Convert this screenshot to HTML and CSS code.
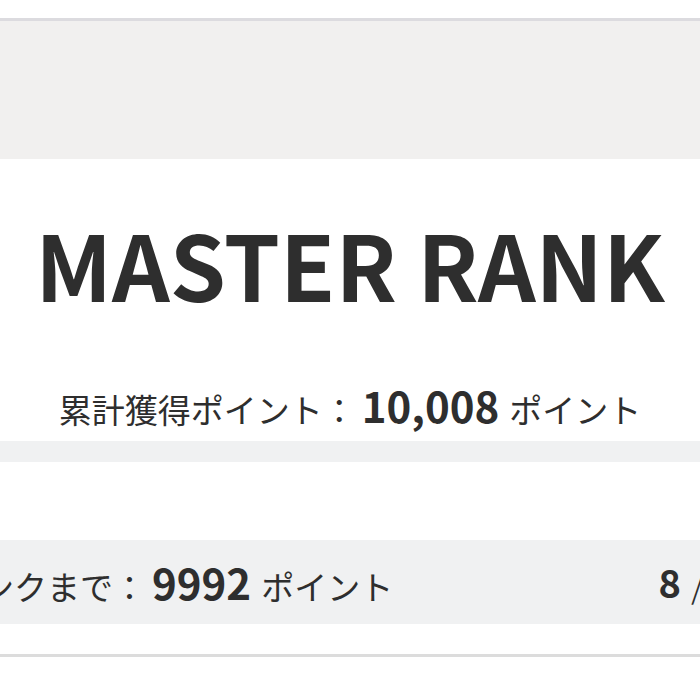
FILE: index.html
```html
<!DOCTYPE html>
<html lang="ja">
<head>
<meta charset="utf-8">
<link rel="stylesheet" href="styles.css">
</head>
<body>
<div class="wrap">
  <div class="topgap"></div>
  <div class="hero"></div>
  <section class="rank">
    <h1 class="rank-title">MASTER RANK</h1>
    <div class="points">
      <span class="label">累計獲得ポイント：</span>
      <span class="num">10,008</span>
      <span class="unit">ポイント</span>
    </div>
  </section>
  <div class="band"></div>
  <div class="next">
    <div class="next-left">
      <span class="label">次のランクまで：</span>
      <span class="num">9992</span>
      <span class="unit">ポイント</span>
    </div>
    <div class="next-right">
      <span class="count">8</span>
      <span class="slash">/ 10</span>
    </div>
  </div>
  <div class="rule"></div>
</div>
</body>
</html>
```
FILE: styles.css
```css
html, body {
  margin: 0;
  padding: 0;
  background: #ffffff;
  overflow: hidden;
}
body {
  font-family: "Noto Sans CJK JP", "Noto Sans", sans-serif;
  color: #2e2e2e;
}
.wrap {
  width: 980px;
  margin-left: -140px;
}
.topgap {
  height: 18px;
}
.hero {
  border-top: 3px solid #dcdbdf;
  height: 138px;
  background: #f1f0ef;
}
.rank {
  padding: 59px 0 15px;
  display: flex;
  flex-direction: column;
  align-items: center;
}
.rank-title {
  margin: 0;
  font-size: 90px;
  line-height: 1;
  font-weight: 700;
  color: #2e2e2e;
}
.points {
  margin-top: 76px;
  display: flex;
  align-items: baseline;
  justify-content: center;
}
.label,
.unit {
  font-size: 33px;
  line-height: 1;
  font-weight: 400;
}
.num {
  font-size: 42px;
  line-height: 1;
  font-weight: 700;
}
.points .num {
  margin: 0 10px 0 6px;
}
.band {
  height: 21px;
  background: #f0f1f2;
}
.next {
  margin-top: 78px;
  height: 84px;
  background: #f0f1f2;
  display: flex;
  align-items: center;
  justify-content: space-between;
  padding: 0 85px 0 22px;
}
.next-left {
  display: flex;
  align-items: baseline;
}
.next-left .num {
  margin: 0 10px 0 6px;
}
.next-right {
  display: flex;
  align-items: baseline;
  gap: 10px;
}
.count {
  font-size: 38px;
  line-height: 1;
  font-weight: 700;
}
.slash {
  font-size: 38px;
  line-height: 1;
  font-weight: 300;
}
.rule {
  margin-top: 30px;
  height: 3px;
  background: #dcdcdc;
}
```
